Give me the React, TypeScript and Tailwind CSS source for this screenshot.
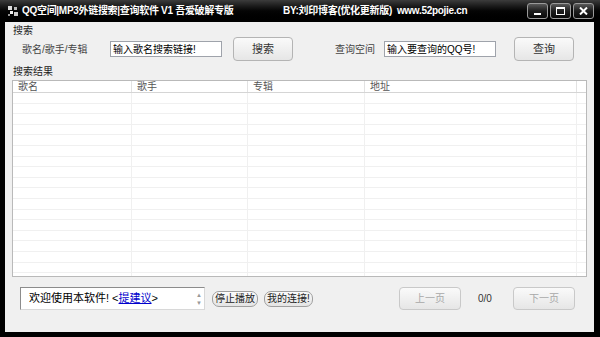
const cjk = '"Liberation Sans", "Noto Sans CJK SC", sans-serif';

function WinBtn({children}: {children: React.ReactNode}) {
  return (
    <div className="w-[21px] h-[16px] rounded-[3px] border border-[#9a9a9a] bg-gradient-to-b from-[#5a5a5a] via-[#1e1e1e] to-[#0a0a0a] flex items-center justify-center text-white">
      {children}
    </div>
  );
}

function Btn({label, className = '', disabled = false}: {label: string; className?: string; disabled?: boolean}) {
  return (
    <div
      className={
        'flex items-center justify-center rounded-[4px] border bg-gradient-to-b from-[#fafafa] to-[#e6e6e6] ' +
        (disabled ? 'border-[#c9c9c9] text-[#a8a8a8] ' : 'border-[#b4b4b4] text-[#333] ') +
        className
      }
    >
      {label}
    </div>
  );
}

function Pill({label, className = ''}: {label: string; className?: string}) {
  return (
    <div
      className={
        'h-[16px] flex items-center justify-center whitespace-nowrap rounded-[7px] border border-[#9f9f9f] bg-gradient-to-b from-[#fbfbfb] to-[#e4e4e4] text-[10px] text-[#222] ' +
        className
      }
    >
      {label}
    </div>
  );
}

const cols = ['歌名', '歌手', '专辑', '地址'];
const widths = ['w-[119px]', 'w-[116px]', 'w-[117px]', 'w-[212px]'];

export default function App() {
  const rows = Array.from({length: 18});
  return (
    <div className="w-[600px] h-[337px] bg-black flex flex-col overflow-hidden" style={{fontFamily: cjk}}>
      {/* title bar */}
      <div className="h-[22px] flex items-center bg-gradient-to-b from-[#3c3c3c] via-[#050505] to-black">
        <svg width="11" height="11" viewBox="0 0 11 11" className="ml-[8px]">
          <rect x="0" y="0" width="4" height="4" fill="#ddd" />
          <rect x="6" y="1" width="3" height="3" fill="#bbb" />
          <rect x="2" y="5" width="3" height="3" fill="#eee" />
          <rect x="6" y="6" width="4" height="4" fill="#ccc" />
          <rect x="0" y="8" width="2" height="2" fill="#999" />
        </svg>
        <span className="ml-[3px] w-[261px] text-white font-bold text-[10px] tracking-[-0.3px] leading-none whitespace-nowrap">
          QQ空间|MP3外链搜索|查询软件 V1 吾爱破解专版
        </span>
        <span className="text-white font-bold text-[10px] tracking-[-0.3px] leading-none whitespace-nowrap">
          BY:刘印博客(优化更新版)&nbsp;&nbsp;www.52pojie.cn
        </span>
        <div className="ml-auto mr-[6px] flex gap-[2px]">
          <WinBtn>
            <div className="w-[7px] h-[2px] bg-white mt-[6px]" />
          </WinBtn>
          <WinBtn>
            <div className="w-[9px] h-[8px] border-[1.5px] border-white border-t-[2px]" />
          </WinBtn>
          <WinBtn>
            <svg width="9" height="8" viewBox="0 0 9 8">
              <path d="M1 0.5 L8 7.5 M8 0.5 L1 7.5" stroke="white" strokeWidth="2" />
            </svg>
          </WinBtn>
        </div>
      </div>

      {/* client */}
      <div className="flex-1 ml-[5px] mr-[6px] mb-[5px] bg-[#f0f0f0] pl-[7px] flex flex-col text-[10px] text-[#222]">
        <div className="ml-[1px] mt-[3px] leading-[12px]">搜索</div>

        <div className="h-[24px] flex items-center">
          <div className="ml-[10px] w-[88px] text-[#444]">歌名/歌手/专辑</div>
          <div className="w-[112px] h-[16px] border border-[#9fa3ab] bg-white flex items-center pl-[2px] text-black">
            输入歌名搜索链接!
          </div>
          <Btn label="搜索" className="ml-[11px] w-[60px] h-[24px] text-[11px]" />
          <div className="ml-[42px] w-[49px] text-[#444]">查询空间</div>
          <div className="w-[112px] h-[16px] border border-[#9fa3ab] bg-white flex items-center pl-[2px] text-black">
            输入要查询的QQ号!
          </div>
          <Btn label="查询" className="ml-[18px] w-[60px] h-[24px] text-[11px]" />
        </div>

        <div className="ml-[1px] mt-[5px] leading-[12px]">搜索结果</div>

        <div className="mt-[2px] w-[575px] h-[197px] border border-[#b9b9b9] bg-white flex flex-col overflow-hidden">
          <div className="h-[12px] flex border-b border-[#d5d5d5] shrink-0">
            {cols.map((c, i) => (
              <div key={c} className={widths[i] + ' border-r border-[#e2e2e2] pl-[5px] leading-[11px] text-[#555]'}>
                {c}
              </div>
            ))}
          </div>
          {rows.map((_, r) => (
            <div key={r} className="h-[10.6px] flex border-b border-[#f0f0f0] shrink-0">
              {widths.map((w, i) => (
                <div key={i} className={w + ' border-r border-[#f0f0f0]'} />
              ))}
            </div>
          ))}
        </div>

        <div className="mt-[10px] h-[23px] flex items-center">
          <div className="ml-[8px] w-[185px] h-[23px] border border-[#8c8c8c] border-b-[#d8d8d8] border-r-[#d8d8d8] bg-white flex items-center">
            <span className="ml-[8px] text-[11px] text-black whitespace-nowrap">
              欢迎使用本软件! &lt;<span className="text-[#0000cc] underline">提建议</span>&gt;
            </span>
            <div className="ml-auto mr-[2px] flex flex-col items-center text-[#999] text-[6px] leading-[8px]">
              <span>▲</span>
              <span>▼</span>
            </div>
          </div>
          <Pill label="停止播放" className="ml-[7px] w-[46px]" />
          <Pill label="我的连接!" className="ml-[6px] w-[49px]" />
          <Btn label="上一页" disabled className="ml-[86px] w-[62px] h-[23px]" />
          <div className="ml-[17px] w-[13px] text-[#333]">0/0</div>
          <Btn label="下一页" disabled className="ml-[22px] w-[62px] h-[23px]" />
        </div>
      </div>
    </div>
  );
}
